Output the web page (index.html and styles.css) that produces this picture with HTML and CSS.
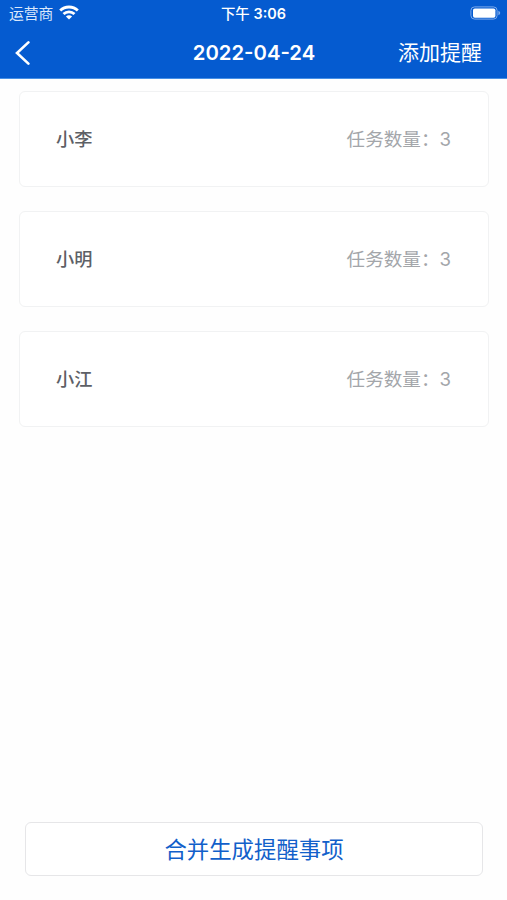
FILE: index.html
```html
<!DOCTYPE html>
<html lang="zh-CN">
<head>
<meta charset="utf-8">
<title>2022-04-24</title>
<link rel="stylesheet" href="styles.css">
</head>
<body>
<div class="screen">
  <header class="header">
    <div class="status">
      <div class="carrier">
        <span class="carrier-name">运营商</span>
        <svg class="wifi" width="20" height="15" viewBox="0 0 20 15" fill="none" stroke="#fff" stroke-width="2.8">
          <path d="M1.2 5.6C6 .8 14 .8 18.8 5.6"/>
          <path d="M4.5 9.1C7.6 6.1 12.4 6.1 15.5 9.1"/>
          <path d="M10 14.6 6.9 11.5C8.6 9.8 11.4 9.8 13.1 11.5Z" fill="#fff" stroke="none"/>
        </svg>
      </div>
      <div class="clock">下午 <span class="time">3:06</span></div>
      <svg class="battery" width="31" height="14" viewBox="0 0 31 14">
        <rect x=".9" y=".9" width="26.2" height="12.2" rx="3.6" fill="none" stroke="#7eaaea" stroke-width="1"/>
        <rect x="3" y="2.5" width="22.4" height="9.2" rx="1.8" fill="#fff"/>
        <path d="M28.4 4.8c2.4.8 2.4 3.6 0 4.4z" fill="#7eaaea"/>
      </svg>
    </div>
    <nav class="nav">
      <svg class="back" width="16" height="24" viewBox="0 0 16 24" fill="none" stroke="#fff" stroke-width="2.6" stroke-linecap="round">
        <path d="M13.4 1.4 2 12 13.4 22.6"/>
      </svg>
      <h1 class="title">2022-04-24</h1>
      <span class="add">添加提醒</span>
    </nav>
  </header>
  <main class="list">
    <div class="card"><span class="name">小李</span><span class="count">任务数量：3</span></div>
    <div class="card"><span class="name">小明</span><span class="count">任务数量：3</span></div>
    <div class="card"><span class="name">小江</span><span class="count">任务数量：3</span></div>
  </main>
  <button class="merge">合并生成提醒事项</button>
</div>
</body>
</html>
```
FILE: styles.css
```css
* { box-sizing: border-box; }
body {
  margin: 0;
  background: #fefefe;
  font-family: Inter, "Noto Sans CJK SC", sans-serif;
}
.screen {
  height: 900px;
  display: flex;
  flex-direction: column;
}
.header {
  height: 79px;
  background: #055bd0;
  border-bottom: 1px solid #4790e6;
  color: #fff;
}
.status {
  height: 27px;
  padding: 0 6px 0 9px;
  display: grid;
  grid-template-columns: 1fr auto 1fr;
  align-items: center;
  font-size: 14.8px;
  line-height: 27px;
}
.carrier {
  height: 27px;
  display: flex;
  align-items: center;
  gap: 6px;
  color: #dbe8fb;
}
.carrier-name { padding-top: 2px; }
.wifi { margin-top: -2px; }
.clock {
  margin-right: 3px;
  font-size: 14.4px;
  font-weight: 500;
}
.time { font-weight: 600; }
.battery {
  justify-self: end;
  margin-top: -1px;
}
.nav {
  height: 51px;
  padding: 0 25px 0 15px;
  display: grid;
  grid-template-columns: 1fr auto 1fr;
  align-items: center;
}
.title {
  margin: 0 0 0 11px;
  font-size: 20.3px;
  font-weight: 600;
  line-height: 30px;
}
.add {
  justify-self: end;
  font-size: 21px;
  line-height: 30px;
}
.list {
  flex: 1;
  padding: 12px 18px 0 19px;
  display: flex;
  flex-direction: column;
  gap: 24px;
}
.card {
  height: 96px;
  padding: 0 37px 0 36px;
  display: flex;
  align-items: center;
  justify-content: space-between;
  background: #fff;
  border: 1px solid #f1f2f3;
  border-radius: 6px;
  font-size: 18.6px;
  line-height: 28px;
}
.name {
  color: #5d6066;
  font-size: 18.2px;
  font-weight: 500;
}
.count { color: #a3a6aa; }
.merge {
  height: 54px;
  margin: 0 24px 24px 25px;
  padding: 0 0 3px;
  background: #fff;
  border: 1.5px solid #e6e6e8;
  border-radius: 6px;
  color: #1260ca;
  font: inherit;
  font-size: 22.4px;
}
```
